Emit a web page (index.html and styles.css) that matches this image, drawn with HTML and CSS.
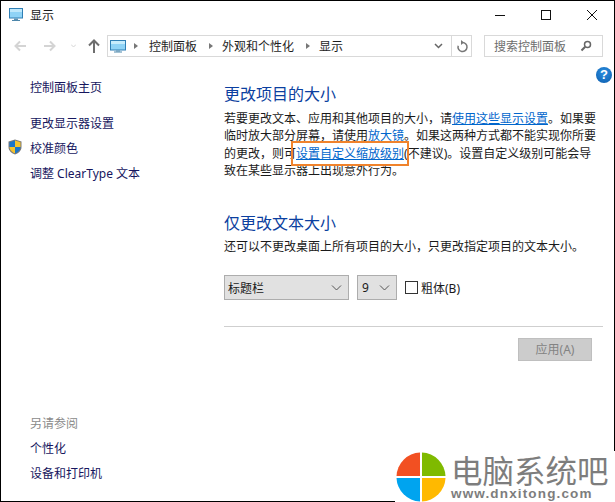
FILE: index.html
```html
<!DOCTYPE html>
<html lang="zh-CN">
<head>
<meta charset="utf-8">
<title>显示</title>
<link rel="stylesheet" href="styles.css">
</head>
<body>
<div class="window">
  <header class="titlebar">
    <svg class="ico-monitor" width="14" height="14" viewBox="0 0 14 14"><rect x="0.5" y="0.5" width="13" height="9.5" fill="#8fd3f6" stroke="#2f7fb5"/><rect x="1" y="1" width="12" height="3" fill="#bfe8fb"/><rect x="5" y="10.5" width="4" height="1.5" fill="#5f93b3"/><rect x="3" y="12" width="8" height="1" fill="#4d87ab"/></svg>
    <span class="title">显示</span>
    <div class="controls">
      <svg width="12" height="12" viewBox="0 0 12 12"><path d="M1 6.500h10" stroke="#111" fill="none"/></svg>
      <svg width="12" height="12" viewBox="0 0 12 12"><rect x="1.500" y="1.500" width="9" height="9" stroke="#111" fill="none"/></svg>
      <svg width="12" height="12" viewBox="0 0 12 12"><path d="M1 1l10 10M11 1L1 11" stroke="#111" fill="none"/></svg>
    </div>
  </header>
  <nav class="navbar">
    <div class="navbtns">
      <svg width="12" height="12" viewBox="0 0 12 12"><path d="M12 6H1.500M6 1.500L1.500 6 6 10.500" stroke="#d4d4d4" stroke-width="2" fill="none"/></svg>
      <svg width="12" height="12" viewBox="0 0 12 12"><path d="M0 6h10.500M6 1.500L10.500 6 6 10.500" stroke="#d4d4d4" stroke-width="2" fill="none"/></svg>
      <svg width="5" height="4" viewBox="0 0 5 4"><path d="M0 0.500l2.500 2.500L5 0.500" stroke="#d4d4d4" fill="none"/></svg>
      <svg width="12" height="14" viewBox="0 0 12 14"><path d="M6 14V2M1 6.500L6 1.500l5 5" stroke="#6e6e6e" stroke-width="2" fill="none"/></svg>
    </div>
    <div class="address">
      <svg class="ico-monitor" width="16" height="13" viewBox="0 0 16 13"><rect x="0.500" y="0.500" width="15" height="9.500" fill="#8fd3f6" stroke="#2f7fb5"/><rect x="1" y="1" width="14" height="3" fill="#c6ecfc"/><rect x="6" y="10.500" width="4" height="1" fill="#5f93b3"/><rect x="4" y="11.500" width="8" height="1" fill="#4d87ab"/></svg>
      <i class="crumb-arrow"></i><span>控制面板</span>
      <i class="crumb-arrow"></i><span>外观和个性化</span>
      <i class="crumb-arrow"></i><span>显示</span>
      <svg class="addr-chev" width="9" height="6" viewBox="0 0 9 6"><path d="M1 1l3.500 3.500L8 1" stroke="#666" stroke-width="1.500" fill="none"/></svg>
      <div class="refresh"><svg width="12" height="13" viewBox="0 0 12 13"><path d="M6.500 2.500a4.500 4.500 0 1 1-4.300 3.200" stroke="#777" stroke-width="1.500" fill="none"/><path d="M5 0l3 2.500L5 5z" fill="#777"/></svg></div>
    </div>
    <div class="search">
      <span>搜索控制面板</span>
      <svg width="12" height="12" viewBox="0 0 12 12"><circle cx="7.500" cy="4.500" r="3" stroke="#666" stroke-width="1.500" fill="none"/><path d="M5.200 6.800L1.500 10.500" stroke="#666" stroke-width="2" fill="none"/></svg>
    </div>
  </nav>
  <span class="help">?</span>
  <div class="body">
    <aside class="sidebar">
      <ul class="side-top">
        <li class="home">控制面板主页</li>
        <li>更改显示器设置</li>
        <li class="shielded">
          <svg class="shield" width="14" height="16" viewBox="0 0 14 16"><path d="M7 0.500L13.500 2.500V8C13.500 12 10 14.500 7 15.500C4 14.500 0.500 12 0.500 8V2.500Z" fill="#7a7a7a"/><path d="M7 1.500V8H1.500V3.200Z" fill="#1b75c9"/><path d="M7 1.500L12.500 3.200V8H7Z" fill="#f5c32c"/><path d="M1.500 8H7V14.300C4.500 13.400 1.700 11.300 1.500 8Z" fill="#f5c32c"/><path d="M7 8H12.500C12.300 11.300 9.500 13.400 7 14.300Z" fill="#1b75c9"/></svg>
          校准颜色
        </li>
        <li>调整 ClearType 文本</li>
      </ul>
      <ul class="side-bottom">
        <li class="seealso">另请参阅</li>
        <li>个性化</li>
        <li>设备和打印机</li>
      </ul>
    </aside>
    <main class="content">
      <h2>更改项目的大小</h2>
      <p class="para">若要更改文本、应用和其他项目的大小，请<a>使用这些显示设置</a>。如果要临时放大部分屏幕，请使用<a>放大镜</a>。如果这两种方式都不能实现你所要的更改，则可<a class="marked">设置自定义缩放级别</a>(不建议)。设置自定义级别可能会导致在某些显示器上出现意外行为。</p>
      <h2 class="second">仅更改文本大小</h2>
      <p class="para tight">还可以不更改桌面上所有项目的大小，只更改指定项目的文本大小。</p>
      <div class="fontrow">
        <div class="select wide"><span>标题栏</span><svg width="11" height="6" viewBox="0 0 11 6"><path d="M1 0.500l4.500 4.500L10 0.500" stroke="#555" fill="none"/></svg></div>
        <div class="select narrow"><span>9</span><svg width="11" height="6" viewBox="0 0 11 6"><path d="M1 0.500l4.500 4.500L10 0.500" stroke="#555" fill="none"/></svg></div>
        <span class="checkbox"></span>
        <span class="bold-label">粗体(B)</span>
      </div>
      <div class="applyrow"><span class="apply">应用(A)</span></div>
    </main>
  </div>
</div>
<div class="watermark">
  <svg width="52" height="52" viewBox="0 0 52 52">
    <path d="M25 25V1.500A24.500 24.500 0 0 0 1.500 25Z" fill="#f25022"/>
    <path d="M27 25V1.500A24.500 24.500 0 0 1 50.500 25Z" fill="#7fba00"/>
    <path d="M25 27H1.500A24.500 24.500 0 0 0 25 50.500Z" fill="#00a4ef"/>
    <path d="M27 27H50.500A24.500 24.500 0 0 1 27 50.500Z" fill="#ffb900"/>
  </svg>
  <div class="wm-text">
    <div class="wm-name">电脑系统吧</div>
    <div class="wm-url">www.dnxitong.com</div>
  </div>
</div>
</body>
</html>
```

FILE: styles.css
```css
* { box-sizing: border-box; }
html, body { margin: 0; padding: 0; }
body {
  width: 615px;
  height: 502px;
  background: #fff;
  overflow: hidden;
  position: relative;
  font-family: "Noto Sans", "Noto Sans CJK SC", sans-serif;
  font-size: 12px;
  color: #1a1a1a;
}
.window {
  width: 615px;
  height: 502px;
  border: 1px solid #000;
  display: flex;
  flex-direction: column;
  position: relative;
}
ul { list-style: none; margin: 0; padding: 0; }

.titlebar { height: 34px; display: flex; align-items: flex-start; padding: 7px 0 0 8px; flex: none; line-height: 15px; }
.ico-monitor { flex: none; }
.title { margin-left: 7px; }
.controls { margin-left: auto; display: flex; gap: 34px; padding-right: 16px; margin-top: 1px; }

.navbar { height: 22px; display: flex; flex: none; }
.navbtns { width: 106px; display: flex; align-items: center; padding-left: 13px; }
.navbtns svg:nth-child(2) { margin-left: 18px; }
.navbtns svg:nth-child(3) { margin-left: 15px; }
.navbtns svg:nth-child(4) { margin-left: 12px; }
.address {
  width: 365px;
  border: 1px solid #d9d9d9;
  display: flex;
  align-items: center;
  padding-left: 2px;
  color: #1e1e1e;
}
.crumb-arrow {
  width: 0; height: 0;
  margin: 0 11px 0 8px;
  border-left: 4px solid #777;
  border-top: 3.500px solid transparent;
  border-bottom: 3.500px solid transparent;
}
.crumb-arrow ~ .crumb-arrow { margin-left: 12px; margin-right: 9px; }
.addr-chev { margin-left: auto; margin-right: 8px; }
.refresh {
  width: 20px;
  height: 100%;
  border-left: 1px solid #d9d9d9;
  display: flex;
  align-items: center;
  justify-content: center;
}
.search {
  width: 119px;
  margin-left: 12px;
  border: 1px solid #d9d9d9;
  display: flex;
  align-items: center;
  justify-content: space-between;
  padding: 0 10px 0 9px;
  color: #6d6d6d;
}

.help {
  position: absolute;
  top: 66px;
  right: 2px;
  width: 16px; height: 16px;
  border-radius: 50%;
  background: radial-gradient(circle at 50% 35%, #2c8fe0, #0b5cad);
  color: #fff;
  font: bold 13px/16px "Liberation Sans", sans-serif;
  text-align: center;
}

.body { flex: 1; display: flex; min-height: 0; }
.sidebar {
  width: 223px;
  flex: none;
  padding: 18px 0 0 29px;
  display: flex;
  flex-direction: column;
  justify-content: space-between;
  color: #16165e;
}
.side-top li { height: 25px; line-height: 25px; position: relative; }
.side-top li.home { margin-bottom: 11px; }
.shield { position: absolute; left: -22px; top: 3px; }
.side-bottom { padding-bottom: 15px; }
.side-bottom li { height: 25px; line-height: 25px; }
.seealso { color: #8a8a8a; }

.content { width: 379px; flex: none; padding-top: 25px; }
h2 {
  margin: 0;
  font-size: 16px;
  font-weight: 400;
  line-height: 24px;
  color: #0b3fa0;
}
h2.second { margin-top: 31px; }
.para { margin: 4px 0 0; line-height: 17.400px; color: #1a1a1a; }
.para.tight { margin-top: 3px; }
a { color: #0066cc; text-decoration: underline; }
a.marked { position: relative; }
a.marked::after {
  content: "";
  position: absolute;
  left: -5px;
  right: -5px;
  top: -4px;
  bottom: -4px;
  border: 2.500px solid #f0832c;
}

.fontrow { display: flex; align-items: center; margin-top: 20px; height: 25px; }
.select {
  height: 25px;
  background: #e1e1e1;
  border: 1px solid #adadad;
  display: flex;
  align-items: center;
  justify-content: space-between;
  padding: 0 6px 0 3px;
}
.wide { width: 125px; }
.narrow { width: 40px; margin-left: 8px; padding-left: 4px; }
.checkbox { width: 13px; height: 13px; border: 1px solid #333; background: #fff; margin-left: 8px; }
.bold-label { margin-left: 3px; }

.applyrow {
  margin-top: 26px;
  border-top: 1px solid #cfcfcf;
  padding: 11px 11px 0 0;
  display: flex;
  justify-content: flex-end;
}
.apply {
  width: 74px; height: 23px;
  background: #ccc;
  border: 1px solid #bfbfbf;
  color: #838383;
  text-align: center;
  line-height: 21px;
}

.watermark {
  position: absolute;
  right: 0;
  bottom: 0;
  width: 220px;
  height: 51px;
  background: #fff;
  display: flex;
  gap: 4px;
  align-items: flex-start;
}
.wm-text { padding-top: 1px; }
.wm-name { font-size: 31.500px; line-height: 34px; color: #7d7d7d; white-space: nowrap; font-family: "Noto Sans CJK SC", sans-serif; }
.wm-url { font: bold 13.500px/15px "Liberation Sans", sans-serif; color: #7d7d7d; letter-spacing: 1.150px; white-space: nowrap; }
```
